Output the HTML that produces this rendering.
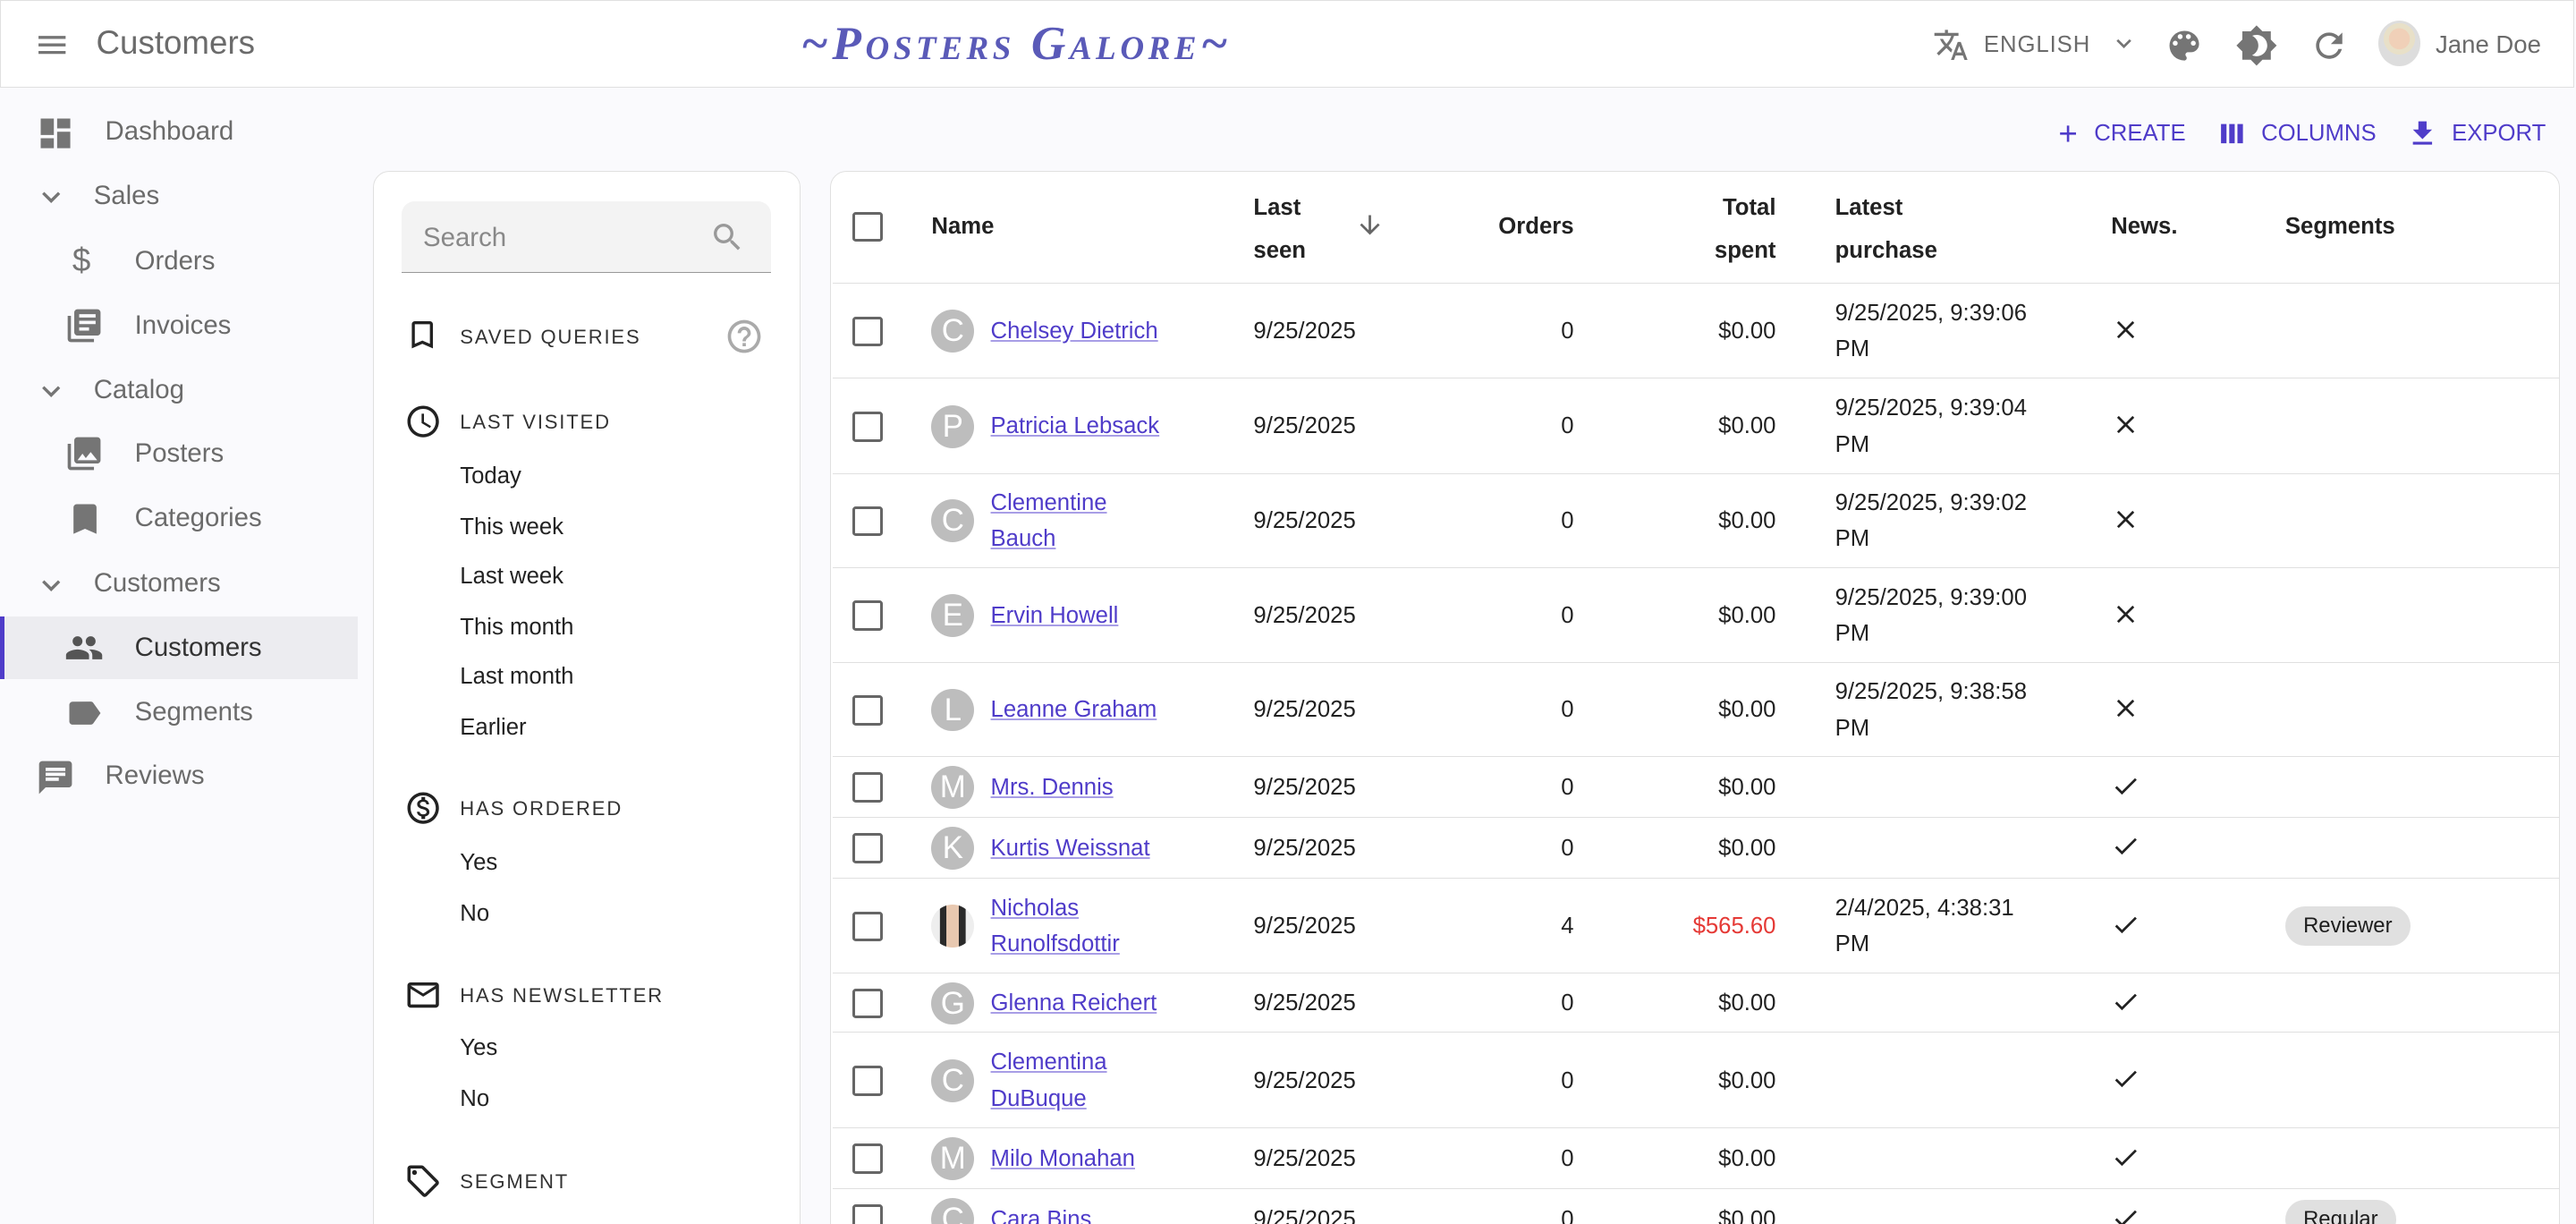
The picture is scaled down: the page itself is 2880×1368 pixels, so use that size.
<!DOCTYPE html>
<html><head><meta charset="utf-8"><style>
html,body{margin:0;padding:0;}
body{width:2880px;height:1368px;overflow:hidden;background:#fafafd;}
#z{zoom:1.83673;width:1568px;height:745px;position:relative;font-family:"Liberation Sans",sans-serif;color:rgba(0,0,0,.87);overflow:hidden;}
.abs{position:absolute;}
.hdr{left:0;top:0;width:1566px;height:52px;background:#fff;border:1px solid #e0e0e0;}
.hdr .title{left:58px;top:14px;font-size:20px;color:#6b6b6b;}
.logo{left:487px;top:9px;font-family:"Liberation Serif",serif;font-style:italic;font-weight:bold;font-size:29px;color:#5a5ab8;letter-spacing:2.5px;font-variant:small-caps;white-space:nowrap;}
.g{fill:#757575;}
.nav{font-size:16px;color:#6b6b6b;}
.nav div{position:absolute;}
.card{background:#fff;border:1px solid #e0e0e0;border-radius:10px;}
.fl{font-size:12px;letter-spacing:1px;color:#333;}
.fi{font-size:14px;color:#222;position:absolute;left:280px;}
.row{position:absolute;left:507px;width:1051px;border-top:1px solid #e0e0e0;}
.cb{position:absolute;left:12px;width:15px;height:15px;border:2px solid #666;border-radius:2px;}
.av{position:absolute;left:60px;width:26px;height:26px;border-radius:50%;background:#bdbdbd;color:#fff;font-size:19px;text-align:center;line-height:26px;}
.nm{position:absolute;left:96px;color:#4f3cc9;text-decoration:underline;text-decoration-color:#a89ee6;line-height:22px;font-size:14px;}
.c{position:absolute;font-size:14px;line-height:22px;}
.btn{color:#4f3cc9;font-size:14px;font-weight:500;}
</style></head><body><div id="z">
<div class="abs hdr">
 <svg class="abs" style="left:20px;top:16px" width="22" height="22" viewBox="0 0 24 24"><path class="g" d="M3 18h18v-2H3v2zm0-5h18v-2H3v2zm0-7v2h18V6H3z"/></svg>
 <div class="abs title">Customers</div>
 <div class="abs logo">~Posters Galore~</div>
 <svg class="abs" style="left:1176px;top:16px" width="22" height="22" viewBox="0 0 24 24"><path class="g" d="M12.87 15.07l-2.54-2.51.03-.03A17.52 17.52 0 0014.07 6H17V4h-7V2H8v2H1v2h11.17C11.5 7.920 10.44 9.75 9 11.35 8.07 10.32 7.3 9.19 6.690 8h-2c.73 1.63 1.73 3.17 2.98 4.56l-5.09 5.02L4 19l5-5 3.11 3.11.76-2.04zM18.5 10h-2L12 22h2l1.12-3h4.75L21 22h2l-4.5-12zm-2.62 7l1.62-4.33L19.12 17h-3.24z"/></svg>
 <div class="abs" style="left:1207px;top:19px;font-size:14px;color:#6b6b6b;font-weight:500;letter-spacing:.5px">ENGLISH</div>
 <svg class="abs" style="left:1283px;top:17px" width="18" height="18" viewBox="0 0 24 24"><path class="g" d="M7.41 8.59L12 13.17l4.59-4.58L18 10l-6 6-6-6z"/></svg>
 <svg class="abs" style="left:1317px;top:15px" width="24" height="24" viewBox="0 0 24 24"><path class="g" d="M12 3a9 9 0 000 18c.83 0 1.5-.67 1.5-1.5 0-.39-.15-.74-.39-1.01-.23-.26-.38-.61-.38-.99 0-.83.67-1.5 1.5-1.5H16c2.76 0 5-2.24 5-5 0-4.420-4.030-8-9-8zm-5.5 9a1.5 1.5 0 110-3 1.5 1.5 0 010 3zm3-4a1.5 1.5 0 110-3 1.5 1.5 0 010 3zm5 0a1.5 1.5 0 110-3 1.5 1.5 0 010 3zm3 4a1.5 1.5 0 110-3 1.5 1.5 0 010 3z"/></svg>
 <svg class="abs" style="left:1360px;top:14px" width="26" height="26" viewBox="0 0 24 24"><path class="g" d="M20 8.69V4h-4.69L12 .69 8.69 4H4v4.69L.69 12 4 15.31V20h4.69L12 23.31 15.31 20H20v-4.69L23.31 12 20 8.69zM12 18c-.89 0-1.74-.2-2.5-.55C11.56 16.5 13 14.42 13 12s-1.44-4.5-3.5-5.45C10.26 6.2 11.11 6 12 6c3.31 0 6 2.69 6 6s-2.69 6-6 6z"/></svg>
 <svg class="abs" style="left:1405px;top:15px" width="24" height="24" viewBox="0 0 24 24"><path class="g" d="M17.65 6.35A7.958 7.958 0 0012 4c-4.42 0-7.99 3.58-7.99 8s3.57 8 7.99 8c3.73 0 6.84-2.55 7.73-6h-2.08A5.99 5.99 0 0112 18c-3.31 0-6-2.69-6-6s2.69-6 6-6c1.66 0 3.14.69 4.22 1.78L13 11h7V4l-2.35 2.35z"/></svg>
 <div class="abs" style="left:1447px;top:12px;width:26px;height:28px;border-radius:50%;background:radial-gradient(circle at 50% 40%,#f0d0b8 0 30%,#e8e0c8 31% 45%,#ddd 46%);"></div>
 <div class="abs" style="left:1482px;top:18px;font-size:15px;color:#6b6b6b">Jane Doe</div>
</div>

<div class="abs nav" style="left:0;top:54px;width:220px;height:700px;">
 <svg style="position:absolute;left:22px;top:15px" width="24" height="24" viewBox="0 0 24 24"><path class="g" d="M3 13h8V3H3v10zm0 8h8v-6H3v6zm10 0h8V11h-8v10zm0-18v6h8V3h-8z"/></svg>
 <div style="left:64px;top:17px">Dashboard</div>
 <svg style="position:absolute;left:20px;top:55px" width="22" height="22" viewBox="0 0 24 24"><path class="g" d="M7.41 8.59L12 13.17l4.59-4.58L18 10l-6 6-6-6z"/></svg>
 <div style="left:57px;top:56px">Sales</div>
 <div style="left:44px;top:93px;font-size:20px;color:#757575">$</div>
 <div style="left:82px;top:96px">Orders</div>
 <svg style="position:absolute;left:39px;top:132px" width="24" height="24" viewBox="0 0 24 24"><path class="g" d="M4 6H2v14c0 1.1.9 2 2 2h14v-2H4V6zm16-4H8c-1.1 0-2 .9-2 2v12c0 1.1.9 2 2 2h12c1.1 0 2-.9 2-2V4c0-1.1-.9-2-2-2zm-1 9H9V9h10v2zm-4 4H9v-2h6v2zm4-8H9V5h10v2z"/></svg>
 <div style="left:82px;top:135px">Invoices</div>
 <svg style="position:absolute;left:20px;top:173px" width="22" height="22" viewBox="0 0 24 24"><path class="g" d="M7.41 8.59L12 13.17l4.59-4.58L18 10l-6 6-6-6z"/></svg>
 <div style="left:57px;top:174px">Catalog</div>
 <svg style="position:absolute;left:39px;top:210px" width="24" height="24" viewBox="0 0 24 24"><path class="g" d="M22 16V4c0-1.1-.9-2-2-2H8c-1.1 0-2 .9-2 2v12c0 1.1.9 2 2 2h12c1.1 0 2-.9 2-2zm-11-4l2.03 2.71L16 11l4 5H8l3-4zM2 6v14c0 1.1.9 2 2 2h14v-2H4V6H2z"/></svg>
 <div style="left:82px;top:213px">Posters</div>
 <svg style="position:absolute;left:40px;top:250px" width="24" height="24" viewBox="0 0 24 24"><path class="g" d="M17 3H7c-1.1 0-2 .9-2 2v16l7-3 7 3V5c0-1.1-.9-2-2-2z"/></svg>
 <div style="left:82px;top:252px">Categories</div>
 <svg style="position:absolute;left:20px;top:291px" width="22" height="22" viewBox="0 0 24 24"><path class="g" d="M7.41 8.59L12 13.17l4.59-4.58L18 10l-6 6-6-6z"/></svg>
 <div style="left:57px;top:292px">Customers</div>
 <div style="left:0;top:321px;width:218px;height:38px;background:#ececf0;border-left:3px solid #4f3cc9;box-sizing:border-box"></div>
 <svg style="position:absolute;left:39px;top:328px" width="24" height="24" viewBox="0 0 24 24"><path d="M16 11c1.66 0 2.99-1.34 2.99-3S17.66 5 16 5c-1.66 0-3 1.34-3 3s1.34 3 3 3zm-8 0c1.66 0 2.99-1.34 2.99-3S9.66 5 8 5C6.34 5 5 6.34 5 8s1.34 3 3 3zm0 2c-2.33 0-7 1.17-7 3.5V19h14v-2.5c0-2.33-4.67-3.5-7-3.5zm8 0c-.29 0-.62.02-.97.05 1.16.84 1.97 1.97 1.97 3.45V19h6v-2.5c0-2.33-4.67-3.5-7-3.5z" fill="#555"/></svg>
 <div style="left:82px;top:331px;color:#333">Customers</div>
 <svg style="position:absolute;left:39px;top:368px" width="24" height="24" viewBox="0 0 24 24"><path class="g" d="M17.63 5.84C17.27 5.33 16.67 5 16 5L5 5.01C3.9 5.01 3 5.9 3 7v10c0 1.1.9 1.99 2 1.99L16 19c.67 0 1.27-.33 1.63-.84L22 12l-4.37-6.16z"/></svg>
 <div style="left:82px;top:370px">Segments</div>
 <svg style="position:absolute;left:22px;top:407px" width="24" height="24" viewBox="0 0 24 24"><path class="g" d="M20 2H4c-1.1 0-1.99.9-1.99 2L2 22l4-4h14c1.1 0 2-.9 2-2V4c0-1.1-.9-2-2-2zM6 9h12v2H6V9zm8 5H6v-2h8v2zm4-6H6V6h12v2z"/></svg>
 <div style="left:64px;top:409px">Reviews</div>
</div>

<div class="abs" style="left:1253px;top:70px;display:flex;gap:0;align-items:center">
 <span class="btn" style="font-size:20px;font-weight:300;margin-right:10px">+</span><span class="btn">CREATE</span>
 <svg style="margin-left:18px;margin-right:8px" width="20" height="20" viewBox="0 0 24 24"><path fill="#4f3cc9" d="M4 5h4v14H4zM10 5h4v14h-4zM16 5h4v14h-4z"/></svg><span class="btn">COLUMNS</span>
 <svg style="margin-left:18px;margin-right:8px" width="20" height="20" viewBox="0 0 24 24"><path fill="#4f3cc9" d="M19 9h-4V3H9v6H5l7 7 7-7zM5 18v2h14v-2H5z"/></svg><span class="btn">EXPORT</span>
</div>

<div class="abs card" style="left:227px;top:104px;width:259px;height:660px;">
 <div class="abs" style="left:17px;top:18px;width:225px;height:43px;background:#f3f3f3;border-radius:8px 8px 0 0;border-bottom:1px solid #999"></div>
 <div class="abs" style="left:30px;top:31px;font-size:16px;color:#888">Search</div>
 <svg class="abs" style="left:204px;top:29px" width="22" height="22" viewBox="0 0 24 24"><path fill="#999" d="M15.5 14h-.79l-.28-.27A6.47 6.47 0 0016 9.5 6.5 6.5 0 109.5 16c1.61 0 3.09-.59 4.23-1.57l.27.28v.79l5 4.99L20.49 19l-4.99-5zm-6 0C7.01 14 5 11.99 5 9.5S7.01 5 9.5 5 14 7.01 14 9.5 11.99 14 9.5 14z"/></svg>
</div>
<svg class="abs" style="left:246px;top:193px" width="22" height="22" viewBox="0 0 24 24"><path fill="#222" d="M17 3H7c-1.1 0-2 .9-2 2v16l7-3 7 3V5c0-1.1-.9-2-2-2zm0 15l-5-2.18L7 18V5h10v13z"/></svg>
<div class="abs fl" style="left:280px;top:198px">SAVED QUERIES</div>
<svg class="abs" style="left:441px;top:193px" width="24" height="24" viewBox="0 0 24 24"><path fill="#aaa" d="M11 18h2v-2h-2v2zm1-16C6.48 2 2 6.48 2 12s4.48 10 10 10 10-4.48 10-10S17.52 2 12 2zm0 18c-4.41 0-8-3.59-8-8s3.59-8 8-8 8 3.59 8 8-3.590 8-8 8zm0-14c-2.21 0-4 1.79-4 4h2c0-1.1.9-2 2-2s2 .9 2 2c0 2-3 1.75-3 5h2c0-2.25 3-2.5 3-5 0-2.21-1.79-4-4-4z"/></svg>
<svg class="abs" style="left:246px;top:245px" width="23" height="23" viewBox="0 0 24 24"><path fill="#222" d="M11.99 2C6.47 2 2 6.48 2 12s4.47 10 9.99 10C17.52 22 22 17.52 22 12S17.52 2 11.99 2zM12 20c-4.42 0-8-3.58-8-8s3.58-8 8-8 8 3.58 8 8-3.58 8-8 8zm.5-13H11v6l5.25 3.15.75-1.23-4.5-2.67z"/></svg>
<div class="abs fl" style="left:280px;top:250px">LAST VISITED</div>
<div class="fi" style="top:282px">Today</div>
<div class="fi" style="top:313px">This week</div>
<div class="fi" style="top:343px">Last week</div>
<div class="fi" style="top:374px">This month</div>
<div class="fi" style="top:404px">Last month</div>
<div class="fi" style="top:435px">Earlier</div>
<svg class="abs" style="left:246px;top:480px" width="23" height="23" viewBox="0 0 24 24"><path fill="#222" d="M12 2C6.48 2 2 6.48 2 12s4.48 10 10 10 10-4.48 10-10S17.52 2 12 2zm0 18c-4.41 0-8-3.59-8-8s3.59-8 8-8 8 3.59 8 8-3.59 8-8 8zm.31-8.86c-1.77-.45-2.34-.94-2.34-1.67 0-.84.79-1.43 2.1-1.43 1.38 0 1.9.66 1.94 1.64h1.71c-.05-1.34-.87-2.57-2.49-2.97V5H10.9v1.69c-1.51.32-2.72 1.3-2.72 2.81 0 1.79 1.49 2.69 3.66 3.21 1.95.46 2.34 1.15 2.34 1.87 0 .53-.39 1.39-2.1 1.39-1.6 0-2.23-.72-2.32-1.64H8.04c.1 1.7 1.36 2.66 2.86 2.97V19h2.34v-1.67c1.52-.29 2.72-1.16 2.73-2.77-.01-2.2-1.9-2.96-3.66-3.42z"/></svg>
<div class="abs fl" style="left:280px;top:485px">HAS ORDERED</div>
<div class="fi" style="top:517px">Yes</div>
<div class="fi" style="top:548px">No</div>
<svg class="abs" style="left:246px;top:594px" width="23" height="23" viewBox="0 0 24 24"><path fill="#222" d="M22 6c0-1.1-.9-2-2-2H4c-1.1 0-2 .9-2 2v12c0 1.1.9 2 2 2h16c1.1 0 2-.9 2-2V6zm-2 0l-8 5-8-5h16zm0 12H4V8l8 5 8-5v10z"/></svg>
<div class="abs fl" style="left:280px;top:599px">HAS NEWSLETTER</div>
<div class="fi" style="top:630px">Yes</div>
<div class="fi" style="top:661px">No</div>
<svg class="abs" style="left:246px;top:707px" width="23" height="23" viewBox="0 0 24 24"><path fill="#222" d="M21.41 11.58l-9-9C12.05 2.22 11.55 2 11 2H4c-1.1 0-2 .9-2 2v7c0 .55.22 1.05.59 1.42l9 9c.36.36.86.58 1.41.58s1.05-.22 1.41-.59l7-7c.37-.36.59-.86.59-1.41s-.23-1.06-.59-1.420zM13 20.01L4 11V4h7v-.01l9 9-7 7.02zM6.5 5C5.67 5 5 5.67 5 6.5S5.67 8 6.5 8 8 7.33 8 6.5 7.33 5 6.5 5z"/></svg>
<div class="abs fl" style="left:280px;top:712px">SEGMENT</div>

<div class="abs card" style="left:505px;top:104px;width:1052px;height:660px;"></div>
<div class="abs" style="left:507px;top:105px;width:1051px;height:67px;font-size:14px;font-weight:bold;color:#222">
 <div class="cb" style="top:24px"></div>
 <div class="c" style="left:60px;top:22px">Name</div>
 <div class="c" style="left:256px;top:9px;line-height:26px">Last<br>seen</div>
 <svg class="abs" style="left:318px;top:23px" width="18" height="18" viewBox="0 0 24 24"><path fill="#666" d="M20 12l-1.41-1.41L13 16.17V4h-2v12.17l-5.58-5.59L4 12l8 8 8-8z"/></svg>
 <div class="c" style="left:390px;width:61px;text-align:right;top:22px">Orders</div>
 <div class="c" style="left:500px;width:74px;text-align:right;top:9px;line-height:26px">Total<br>spent</div>
 <div class="c" style="left:610px;top:9px;line-height:26px">Latest<br>purchase</div>
 <div class="c" style="left:778px;top:22px">News.</div>
 <div class="c" style="left:884px;top:22px">Segments</div>
</div>

<div id="rows"></div>
<script>
const X='<svg width="18" height="18" viewBox="0 0 24 24"><path fill="#222" d="M19 6.41L17.59 5 12 10.59 6.41 5 5 6.41 10.59 12 5 17.59 6.41 19 12 13.41 17.59 19 19 17.59 13.41 12z"/></svg>';
const V='<svg width="18" height="18" viewBox="0 0 24 24"><path fill="#222" d="M9 16.17L4.83 12l-1.42 1.41L9 19 21 7l-1.41-1.41z"/></svg>';
const rows=[
[172,58,'C','Chelsey Dietrich','0','$0.00','9/25/2025, 9:39:06<br>PM',X,''],
[230,58,'P','Patricia Lebsack','0','$0.00','9/25/2025, 9:39:04<br>PM',X,''],
[288,57,'C','Clementine<br>Bauch','0','$0.00','9/25/2025, 9:39:02<br>PM',X,''],
[345,58,'E','Ervin Howell','0','$0.00','9/25/2025, 9:39:00<br>PM',X,''],
[403,57,'L','Leanne Graham','0','$0.00','9/25/2025, 9:38:58<br>PM',X,''],
[460,37,'M','Mrs. Dennis','0','$0.00','',V,''],
[497,37,'K','Kurtis Weissnat','0','$0.00','',V,''],
[534,58,'*','Nicholas<br>Runolfsdottir','4','$565.60','2/4/2025, 4:38:31<br>PM',V,'Reviewer'],
[592,36,'G','Glenna Reichert','0','$0.00','',V,''],
[628,58,'C','Clementina<br>DuBuque','0','$0.00','',V,''],
[686,37,'M','Milo Monahan','0','$0.00','',V,''],
[723,37,'C','Cara Bins','0','$0.00','',V,'Regular']];
let h='';
for(const r of rows){const [t,ht,l,n,o,s,p,ic,seg]=r;const m=ht/2;
const two=n.includes('<br>');
h+=`<div class="row" style="top:${t}px;height:${ht}px">
<div class="cb" style="top:${m-9}px"></div>
<div class="av" style="top:${m-13}px;${l=='*'?'background:linear-gradient(90deg,#eee 0 20%,#2a2a2a 21% 35%,#e8c8b0 36% 64%,#2a2a2a 65% 80%,#eee 81%)':''}">${l=='*'?'':l}</div>
<div class="nm" style="top:${m-(two?22:11)}px">${n}</div>
<div class="c" style="left:256px;top:${m-11}px">9/25/2025</div>
<div class="c" style="left:390px;width:61px;text-align:right;top:${m-11}px">${o}</div>
<div class="c" style="left:480px;width:94px;text-align:right;top:${m-11}px;${o=='4'?'color:#e53935':''}">${s}</div>
<div class="c" style="left:610px;top:${m-(p.includes('<br>')?22:11)}px">${p}</div>
<div class="c" style="left:778px;top:${m-10}px">${ic}</div>
${seg?`<div class="c" style="left:884px;top:${m-12}px;background:#e0e0e0;border-radius:12px;padding:1px 11px;font-size:13px">${seg}</div>`:''}
</div>`;}
document.getElementById('rows').innerHTML=h;
</script>
</div></body></html>
